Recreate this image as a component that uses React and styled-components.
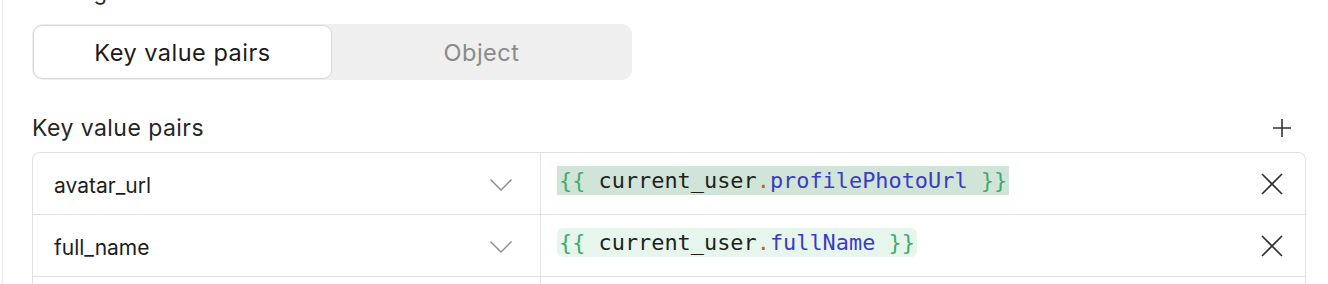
import React from "react";
import styled, { createGlobalStyle } from "styled-components";

const Global = createGlobalStyle`
  html, body { margin: 0; padding: 0; background: #ffffff; }
  body { font-family: Inter, "Noto Sans", sans-serif; overflow: hidden; }
`;

const Panel = styled.div`
  margin-left: 2px;
  border-left: 1px solid #e8e8e8;
  padding: 0 22px 0 29px;
  height: 284px;
  box-sizing: border-box;
  overflow: hidden;
`;

const TopLabel = styled.div`
  font-size: 22px;
  line-height: 24px;
  color: #2a2a2a;
  margin-top: -20px;
  letter-spacing: 0.4px;
`;

const Segmented = styled.div`
  margin-top: 20px;
  width: 600px;
  height: 56px;
  box-sizing: border-box;
  background: #efefef;
  border-radius: 10px;
  padding: 1px;
  display: flex;
`;

const Segment = styled.button`
  flex: 1;
  border: 1px solid ${(p) => (p.$active ? "#d8d8d8" : "transparent")};
  background: ${(p) => (p.$active ? "#ffffff" : "transparent")};
  border-radius: 9px;
  font-family: Inter, "Noto Sans", sans-serif;
  font-size: 23.5px;
  letter-spacing: 0.5px;
  color: ${(p) => (p.$active ? "#1b1b1b" : "#8a8a8a")};
  display: flex;
  align-items: center;
  justify-content: center;
  padding: 0;
  cursor: pointer;
`;

const SectionHeader = styled.div`
  margin-top: 32px;
  height: 32px;
  display: flex;
  align-items: center;
  justify-content: space-between;
  padding-right: 14px;
`;

const SectionTitle = styled.div`
  font-size: 23px;
  letter-spacing: 0.45px;
  color: #262626;
  margin-left: 0;
`;

const IconButton = styled.button`
  border: none;
  background: none;
  padding: 0;
  display: flex;
  align-items: center;
  justify-content: center;
  color: #333;
  cursor: pointer;
`;

const Table = styled.div`
  margin-top: 8px;
  border: 1px solid #e2e2e2;
  border-bottom: none;
  border-radius: 8px 8px 0 0;
`;

const Row = styled.div`
  display: grid;
  grid-template-columns: 508px 1fr;
  height: 61px;
  border-bottom: 1px solid #e2e2e2;
`;

const KeyCell = styled.div`
  border-right: 1px solid #e2e2e2;
  display: flex;
  align-items: center;
  justify-content: space-between;
  padding: 3px 27px 0 21px;
`;

const KeyText = styled.span`
  font-size: 21px;
  color: #1d1d1d;
`;

const ValueCell = styled.div`
  display: flex;
  align-items: flex-start;
  justify-content: space-between;
  padding: 13px 21px 0 16px;
`;

const Chip = styled.span`
  display: inline-block;
  height: 29px;
  line-height: 29px;
  padding: 0 2px;
  background: ${(p) => (p.$selected ? "#d1e4d8" : "#e7f6ec")};
  border-radius: ${(p) => (p.$selected ? "0" : "6px")};
  font-family: "DejaVu Sans Mono", "Liberation Mono", monospace;
  font-size: 21.9px;
  white-space: pre;
  color: #1f1f1f;
`;

const Brace = styled.span`
  color: #3dac6c;
`;
const Dot = styled.span`
  color: #b8652c;
`;
const Prop = styled.span`
  color: #3b3bc6;
`;

const XButton = styled(IconButton)`
  margin-top: 6px;
`;

const Chevron = () => (
  <svg width="24" height="14" viewBox="0 0 24 14" fill="none">
    <path d="M1.5 1.5 L12 12 L22.5 1.5" stroke="#8c8c8c" strokeWidth="1.4" />
  </svg>
);

const Close = () => (
  <svg width="24" height="24" viewBox="0 0 24 24" fill="none">
    <path d="M2 2 L22 22 M22 2 L2 22" stroke="#2e2e2e" strokeWidth="1.6" />
  </svg>
);

const Plus = () => (
  <svg width="20" height="20" viewBox="0 0 20 20" fill="none">
    <path d="M10 1 V19 M1 10 H19" stroke="#333" strokeWidth="1.6" />
  </svg>
);

const rows = [
  { key: "avatar_url", obj: "current_user", prop: "profilePhotoUrl", selected: true },
  { key: "full_name", obj: "current_user", prop: "fullName", selected: false },
  { key: "", obj: "", prop: "", selected: false },
];

export default function App() {
  return (
    <>
      <Global />
      <Panel>
        <TopLabel>Settings</TopLabel>
        <Segmented>
          <Segment $active>Key value pairs</Segment>
          <Segment>Object</Segment>
        </Segmented>
        <SectionHeader>
          <SectionTitle>Key value pairs</SectionTitle>
          <IconButton aria-label="Add">
            <Plus />
          </IconButton>
        </SectionHeader>
        <Table>
          {rows.map((r, i) => (
            <Row key={i}>
              <KeyCell>
                {r.key && <KeyText>{r.key}</KeyText>}
                {r.key && <Chevron />}
              </KeyCell>
              <ValueCell>
                {r.obj && (
                  <Chip $selected={r.selected}>
                    <Brace>{"{{"}</Brace> {r.obj}
                    <Dot>.</Dot>
                    <Prop>{r.prop}</Prop> <Brace>{"}}"}</Brace>
                  </Chip>
                )}
                {r.obj && (
                  <XButton aria-label="Remove">
                    <Close />
                  </XButton>
                )}
              </ValueCell>
            </Row>
          ))}
        </Table>
      </Panel>
    </>
  );
}
